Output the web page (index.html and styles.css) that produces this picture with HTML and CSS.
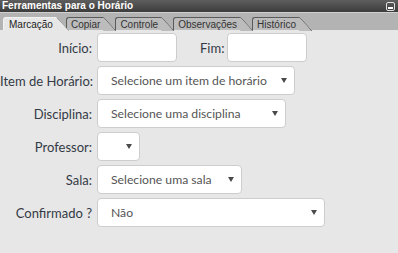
FILE: index.html
```html
<!DOCTYPE html>
<html lang="pt-BR">
<head>
<meta charset="utf-8">
<title>Ferramentas para o Horário</title>
<link rel="stylesheet" href="styles.css">
</head>
<body>
<div class="panel">
  <div class="titlebar">
    <span class="title">Ferramentas para o Horário</span>
    <span class="min-btn"><span class="min-bar"></span></span>
  </div>
  <div class="tabs">
    <div class="tab active">Marcação</div>
    <div class="tab t2">Copiar</div>
    <div class="tab t3">Controle</div>
    <div class="tab t4">Observações</div>
    <div class="tab t5">Histórico</div>
  </div>
  <form class="form">
    <label class="lbl">Início:</label>
    <div class="ctl row1">
      <input class="inp inp-ini" type="text">
      <label class="lbl lbl-fim">Fim:</label>
      <input class="inp inp-fim" type="text">
    </div>

    <label class="lbl">Item de Horário:</label>
    <div class="ctl"><span class="sel w-item"><select><option>Selecione um item de horário</option></select></span></div>

    <label class="lbl">Disciplina:</label>
    <div class="ctl"><span class="sel w-disc"><select><option>Selecione uma disciplina</option></select></span></div>

    <label class="lbl">Professor:</label>
    <div class="ctl"><span class="sel w-prof"><select><option></option></select></span></div>

    <label class="lbl">Sala:</label>
    <div class="ctl"><span class="sel w-sala"><select><option>Selecione uma sala</option></select></span></div>

    <label class="lbl">Confirmado ?</label>
    <div class="ctl"><span class="sel w-conf"><select><option>Não</option></select></span></div>
  </form>
</div>
</body>
</html>
```
FILE: styles.css
```css
html, body {
  margin: 0;
  padding: 0;
  background: #e7e7e7;
}
.panel {
  width: 398px;
  height: 253px;
  background: #e7e7e7;
  font-family: "Liberation Sans", Arial, sans-serif;
}
.titlebar {
  height: 12px;
  background: linear-gradient(#5e5e5e, #3c3c3c);
  border-bottom: 1px solid #d0d0d0;
  display: flex;
  align-items: center;
  justify-content: space-between;
  padding: 0 2px 0 2px;
}
.title {
  color: #fff;
  font-weight: bold;
  font-size: 10px;
  line-height: 12px;
}
.min-btn {
  width: 9px;
  height: 9px;
  border: 1px solid #e0e0e0;
  border-radius: 2px;
  display: flex;
  align-items: flex-end;
  justify-content: center;
  box-sizing: border-box;
  padding-bottom: 1px;
  margin-right: 1px;
}
.min-bar {
  width: 5px;
  height: 2px;
  background: #fff;
}
.tabs {
  height: 17px;
  background: #b3b3b3;
  display: flex;
  align-items: flex-end;
  padding-left: 3px;
}
.tab {
  position: relative;
  height: 12px;
  padding: 0 3px 0 4px;
  margin-right: 12px;
  font-size: 10px;
  line-height: 13px;
  color: #333;
  background: #bcbcbc;
  border-left: 1px solid #5a5a5a;
  border-top: 1px solid #5a5a5a;
  border-top-left-radius: 3px;
}
.tab::after {
  content: "";
  position: absolute;
  top: -1px;
  left: calc(100% - 12px);
  width: 12px;
  height: 13px;
  background: inherit;
  border-top: 1px solid #5a5a5a;
  border-right: 1px solid #5a5a5a;
  border-top-right-radius: 2px;
  transform: skewX(42deg);
  transform-origin: top left;
  z-index: -1;
}
.t2 { z-index: 4; }
.t3 { z-index: 3; }
.t4 { z-index: 2; }
.t5 { z-index: 1; }
.tab.active {
  background: #e7e7e7;
  border-left-color: #f2f2f2;
  border-top-color: #f2f2f2;
  color: #222;
  z-index: 5;
  padding-left: 5px;
  margin-right: 10px;
}
.tab.active::after {
  border-top-color: #f2f2f2;
  border-right-color: #8a8a8a;
}
.form {
  display: grid;
  grid-template-columns: 92px 1fr;
  column-gap: 5px;
  row-gap: 4px;
  margin: 0;
  padding-top: 3px;
  font-family: Lato, "Open Sans", sans-serif;
  font-size: 13px;
}
.lbl {
  color: #333a45;
  text-align: right;
  align-self: center;
  white-space: nowrap;
}
.ctl {
  display: flex;
  align-items: center;
  height: 29px;
}
.inp {
  box-sizing: border-box;
  height: 29px;
  border: 1px solid #cdcdcd;
  border-radius: 4px;
  background: #fff;
  margin: 0;
  padding: 0 6px;
  outline: none;
}
.inp-ini { width: 80px; }
.inp-fim { width: 80px; }
.lbl-fim {
  margin-left: 23px;
  margin-right: 3px;
}
.sel {
  position: relative;
  display: inline-block;
  height: 29px;
}
.sel select {
  appearance: none;
  -webkit-appearance: none;
  box-sizing: border-box;
  width: 100%;
  height: 29px;
  border: 1px solid #cdcdcd;
  border-radius: 4px;
  background: #fff;
  margin: 0;
  padding: 0 0 0 13px;
  font-family: Lato, "Open Sans", sans-serif;
  font-size: 12.2px;
  color: #555;
  outline: none;
}
.sel::after {
  content: "";
  position: absolute;
  right: 8px;
  top: 12px;
  border-left: 3px solid transparent;
  border-right: 3px solid transparent;
  border-top: 5px solid #4a4a4a;
  pointer-events: none;
}
.w-item { width: 198px; }
.w-disc { width: 189px; }
.w-prof { width: 43px; }
.w-sala { width: 145px; }
.w-conf { width: 228px; }
```
